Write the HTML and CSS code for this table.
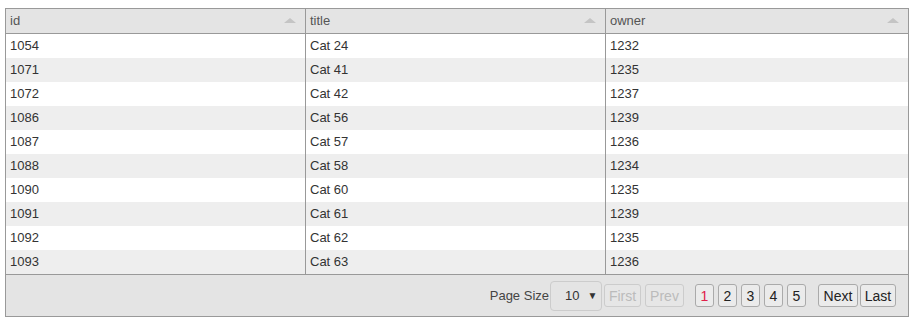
FILE: index.html
```html
<!DOCTYPE html>
<html>
<head>
<meta charset="utf-8">
<link rel="stylesheet" href="styles.css">
</head>
<body>
<div class="grid">
  <table class="tbl">
    <thead>
      <tr>
        <th class="c1"><span>id</span><i class="sort"></i></th>
        <th class="c2"><span>title</span><i class="sort"></i></th>
        <th class="c3"><span>owner</span><i class="sort"></i></th>
      </tr>
    </thead>
    <tbody>
      <tr><td>1054</td><td>Cat 24</td><td>1232</td></tr>
      <tr><td>1071</td><td>Cat 41</td><td>1235</td></tr>
      <tr><td>1072</td><td>Cat 42</td><td>1237</td></tr>
      <tr><td>1086</td><td>Cat 56</td><td>1239</td></tr>
      <tr><td>1087</td><td>Cat 57</td><td>1236</td></tr>
      <tr><td>1088</td><td>Cat 58</td><td>1234</td></tr>
      <tr><td>1090</td><td>Cat 60</td><td>1235</td></tr>
      <tr><td>1091</td><td>Cat 61</td><td>1239</td></tr>
      <tr><td>1092</td><td>Cat 62</td><td>1235</td></tr>
      <tr><td>1093</td><td>Cat 63</td><td>1236</td></tr>
    </tbody>
  </table>
  <div class="pager">
    <span class="label">Page Size</span>
    <div class="select"><span>10</span><span class="caret">&#9660;</span></div>
    <button class="btn disabled w-first">First</button>
    <button class="btn disabled w-prev">Prev</button>
    <div class="pages">
      <button class="btn num current">1</button>
      <button class="btn num">2</button>
      <button class="btn num">3</button>
      <button class="btn num">4</button>
      <button class="btn num">5</button>
    </div>
    <div class="nav">
      <button class="btn w-next">Next</button>
      <button class="btn w-last">Last</button>
    </div>
  </div>
</div>
</body>
</html>
```
FILE: styles.css
```css
html, body {
  margin: 0;
  padding: 0;
  background: #fff;
}
body {
  font-family: "Liberation Sans", Arial, sans-serif;
  font-size: 13px;
  color: #333;
}
.grid {
  margin: 8px 7px 0 5px;
  border: 1px solid #999;
  width: 902px;
}
.tbl {
  width: 100%;
  border-collapse: collapse;
  table-layout: fixed;
}
.tbl th {
  background: #e4e4e4;
  height: 24px;
  padding: 0 0 0 4px;
  text-align: left;
  font-weight: normal;
  color: #555;
  border-bottom: 1px solid #999;
  position: relative;
}
.tbl th span {
  position: relative;
  top: -1px;
}
.c1 { width: 295px; }
.c2 { width: 295px; }
.tbl th, .tbl td {
  border-right: 1px solid #999;
}
.tbl th:last-child, .tbl td:last-child {
  border-right: none;
}
.sort {
  position: absolute;
  right: 9px;
  top: 9px;
  width: 0;
  height: 0;
  border-left: 6px solid transparent;
  border-right: 6px solid transparent;
  border-bottom: 5px solid #c4c4c4;
}
.tbl td {
  height: 22px;
  padding: 0 0 2px 4px;
  color: #333;
}
.tbl tbody tr:nth-child(even) td {
  background: #eee;
}
.tbl tbody tr:last-child td {
  border-bottom: 1px solid #999;
}
.pager {
  background: #e4e4e4;
  height: 41px;
  display: flex;
  align-items: center;
  justify-content: flex-end;
  padding-right: 12px;
}
.label {
  color: #444;
  margin-right: 1px;
}
.select {
  width: 52px;
  height: 30px;
  box-sizing: border-box;
  border: 1px solid #ccc;
  border-radius: 4px;
  display: flex;
  align-items: center;
  padding-left: 14px;
  color: #333;
}
.caret {
  font-size: 10px;
  margin-left: 8px;
  color: #333;
}
.btn {
  font-family: "Liberation Sans", Arial, sans-serif;
  font-size: 14px;
  height: 23px;
  padding: 0;
  border: 1px solid #aaa;
  border-radius: 3px;
  background: #ebebeb;
  color: #222;
  margin: 0;
  box-sizing: border-box;
  text-align: center;
}
.btn.disabled {
  color: #bbb;
  border-color: #ccc;
  background: #e6e6e6;
  margin-left: 2px;
}
.btn.disabled + .btn.disabled {
  margin-left: 4px;
}
.w-first { width: 37px; }
.w-prev { width: 39px; }
.w-next { width: 40px; }
.w-last { width: 36px; }
.pages {
  display: flex;
  gap: 4px;
  margin-left: 11px;
}
.num {
  width: 19px;
}
.current {
  color: #e0204a;
}
.nav {
  display: flex;
  gap: 2px;
  margin-left: 12px;
}
```
